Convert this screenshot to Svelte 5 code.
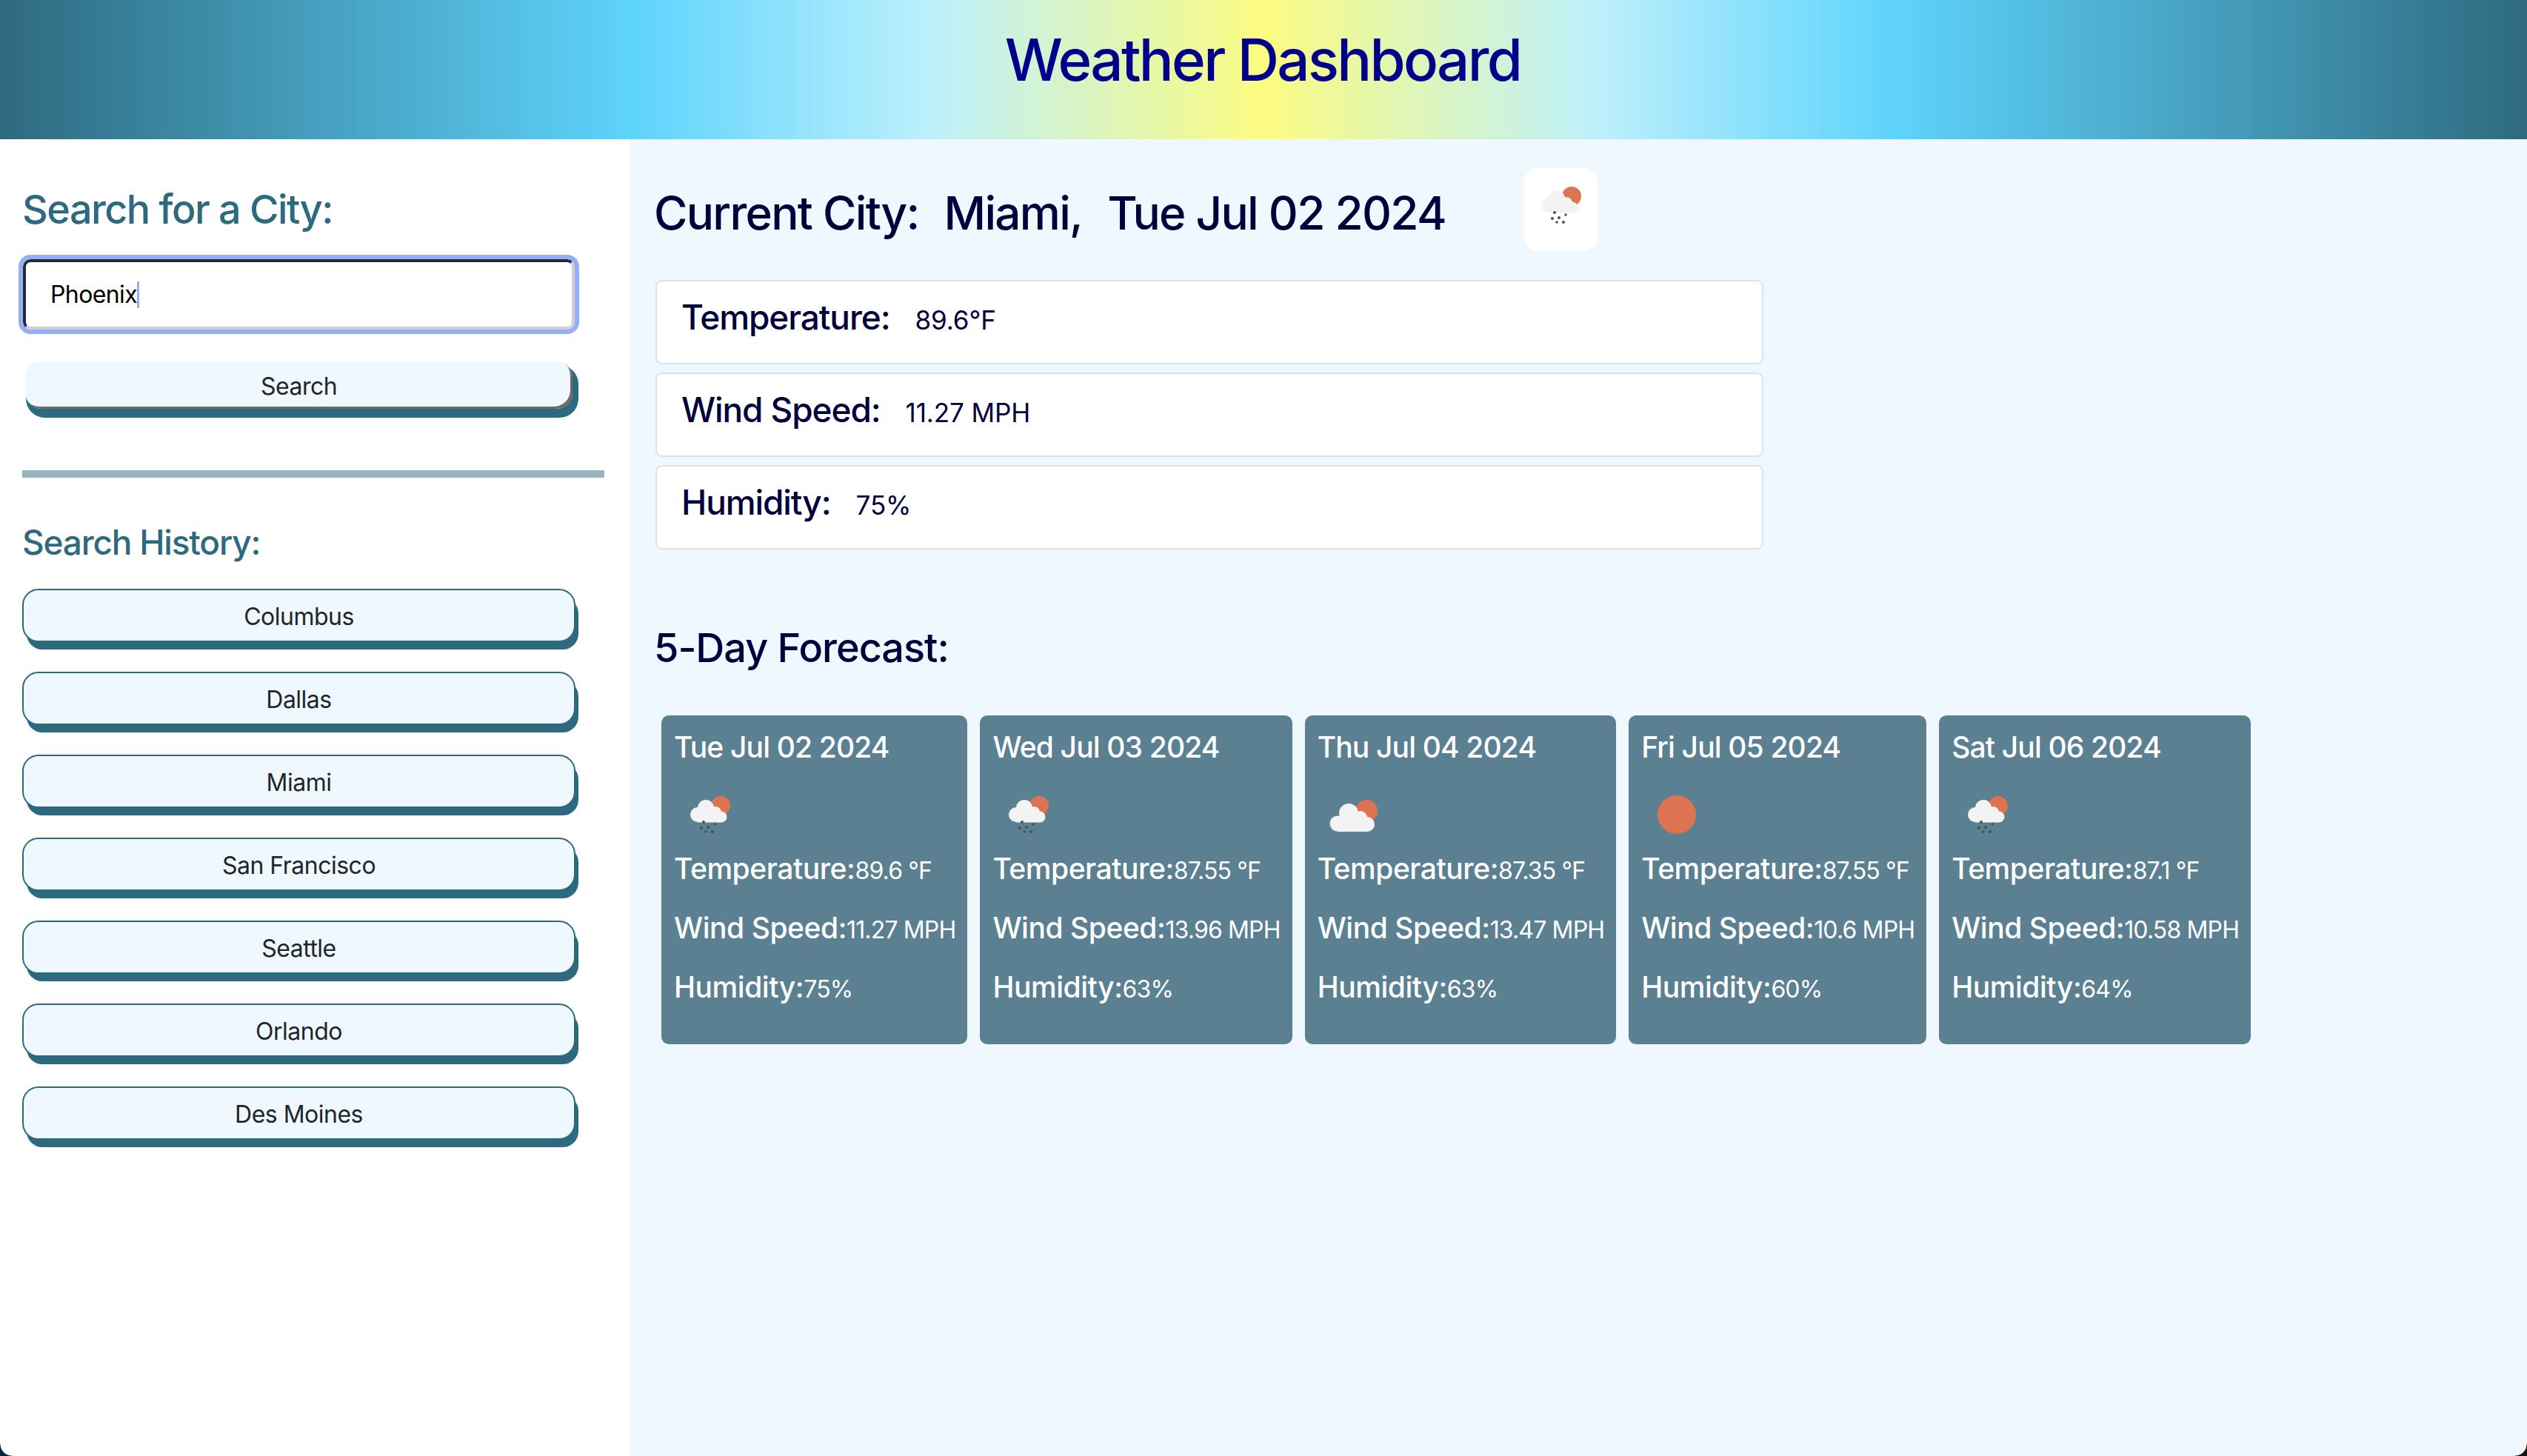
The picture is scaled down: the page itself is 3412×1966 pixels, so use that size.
<script lang="ts">
	type Condition = 'rain' | 'cloud' | 'sun';

	const history = ['Columbus', 'Dallas', 'Miami', 'San Francisco', 'Seattle', 'Orlando', 'Des Moines'];

	const stats = [
		{ label: 'Temperature:', value: '89.6°F' },
		{ label: 'Wind Speed:', value: '11.27 MPH' },
		{ label: 'Humidity:', value: '75%' }
	];

	const forecast: { date: string; icon: Condition; temp: string; wind: string; humidity: string }[] = [
		{ date: 'Tue Jul 02 2024', icon: 'rain', temp: '89.6 °F', wind: '11.27 MPH', humidity: '75%' },
		{ date: 'Wed Jul 03 2024', icon: 'rain', temp: '87.55 °F', wind: '13.96 MPH', humidity: '63%' },
		{ date: 'Thu Jul 04 2024', icon: 'cloud', temp: '87.35 °F', wind: '13.47 MPH', humidity: '63%' },
		{ date: 'Fri Jul 05 2024', icon: 'sun', temp: '87.55 °F', wind: '10.6 MPH', humidity: '60%' },
		{ date: 'Sat Jul 06 2024', icon: 'rain', temp: '87.1 °F', wind: '10.58 MPH', humidity: '64%' }
	];

	const rainDrops = [
		[42, 54, 2],
		[39, 62, 2],
		[48, 61, 2],
		[57, 57, 1.7],
		[45, 67, 1.7],
		[54, 67, 2]
	];
</script>

{#snippet weatherIcon(kind: Condition)}
	<svg class="weather-icon" viewBox="0 0 100 100" aria-hidden="true">
		{#if kind === 'sun'}
			<circle cx="50" cy="44" r="26" fill="#dd7350" />
		{:else if kind === 'cloud'}
			<circle cx="68" cy="39" r="15" fill="#dd7350" />
			<g fill="#f3f3f3">
				<circle cx="29" cy="56" r="10.5" />
				<circle cx="44" cy="42" r="13" />
				<circle cx="60" cy="48" r="9" />
				<circle cx="69" cy="57" r="10" />
				<rect x="29" y="50" width="40" height="17" />
			</g>
		{:else}
			<circle cx="65" cy="32" r="13" fill="#dd7350" />
			<g fill="#f3f3f3">
				<circle cx="34" cy="44" r="10" />
				<circle cx="45" cy="35" r="11" />
				<circle cx="58" cy="41" r="8" />
				<circle cx="66" cy="47" r="7.5" />
				<rect x="34" y="42" width="32" height="12.5" />
			</g>
			<g fill="#4a4f55">
				{#each rainDrops as [cx, cy, r]}
					<circle {cx} {cy} {r} />
				{/each}
			</g>
		{/if}
	</svg>
{/snippet}

<div class="page">
	<header class="banner">
		<h1>Weather Dashboard</h1>
	</header>

	<div class="layout">
		<aside class="sidebar">
			<h2>Search for a City:</h2>
			<div class="search-field">
				<span>Phoenix</span><i class="caret"></i>
			</div>
			<button type="button" class="city-btn search-btn">Search</button>
			<div class="rule"></div>
			<h3>Search History:</h3>
			<div class="history">
				{#each history as city}
					<button type="button" class="city-btn">{city}</button>
				{/each}
			</div>
		</aside>

		<main class="content">
			<div class="current-head">
				<h2>Current City:<span>Miami,</span><span>Tue Jul 02 2024</span></h2>
				<div class="icon-box">{@render weatherIcon('rain')}</div>
			</div>

			<ul class="stats">
				{#each stats as stat}
					<li><b>{stat.label}</b><span>{stat.value}</span></li>
				{/each}
			</ul>

			<h3 class="forecast-title">5-Day Forecast:</h3>

			<div class="forecast">
				{#each forecast as day}
					<article class="day">
						<h4>{day.date}</h4>
						<div class="day-icon">{@render weatherIcon(day.icon)}</div>
						<p><b>Temperature:</b>{day.temp}</p>
						<p><b>Wind Speed:</b>{day.wind}</p>
						<p><b>Humidity:</b>{day.humidity}</p>
					</article>
				{/each}
			</div>
		</main>
	</div>

	<i class="corner left"></i>
	<i class="corner right"></i>
</div>

<style>
	:global(body) {
		margin: 0;
		background: #f0f8ff;
	}

	.page {
		position: relative;
		height: 1966px;
		overflow: hidden;
		font-family: Inter, 'Liberation Sans', sans-serif;
		color: #212529;
	}

	.banner {
		height: 188px;
		box-sizing: border-box;
		padding-bottom: 28px;
		display: flex;
		align-items: center;
		justify-content: center;
		background: linear-gradient(to right, #2e6a7f 0%, #5dd3fc 25%, #bef0fb 37%, #fbfb80 50%, #bef0fb 63%, #5dd3fc 75%, #2e6a7f 100%);
	}

	.banner h1 {
		margin: 0 2px 0 0;
		font-size: 78px;
		font-weight: 550;
		letter-spacing: -2.7px;
		color: #00008b;
	}

	.layout {
		display: flex;
		height: 1778px;
	}

	.sidebar {
		width: 851px;
		flex: none;
		box-sizing: border-box;
		padding: 64px 35px 0 30px;
		background: #fff;
	}

	.sidebar h2 {
		margin: 0 0 36px;
		font-size: 54px;
		line-height: 62px;
		font-weight: 550;
		letter-spacing: -1.6px;
		color: #2e6a7f;
	}

	.search-field {
		width: 745px;
		height: 95px;
		box-sizing: border-box;
		display: flex;
		align-items: center;
		padding-left: 33px;
		margin: 0 0 43px 1px;
		border: 4px solid;
		border-color: #2a2a30 #cfcfcf #cfcfcf #2a2a30;
		border-radius: 10px;
		outline: 6px solid #94aff5;
		font-size: 32px;
		letter-spacing: -0.6px;
		color: #000;
		background: #fff;
	}

	.caret {
		width: 3px;
		height: 36px;
		background: #94aff5;
	}

	.city-btn {
		display: block;
		width: 743px;
		height: 66px;
		box-sizing: content-box;
		padding: 2px 0 0;
		border: 2px solid #2e6a7f;
		border-radius: 22px;
		background: #f0f8ff;
		box-shadow: 5px 11px 0 -1px #2e6a7f;
		font-family: inherit;
		font-size: 32px;
		letter-spacing: -0.5px;
		color: #212529;
		text-align: center;
	}

	.search-btn {
		width: 739px;
		height: 62px;
		margin-left: 4px;
		border: 0;
		box-shadow: inset -3px -3px 0 #6b6b6b, 4.5px 8.5px 0 3.5px #2e6a7f;
	}

	.rule {
		height: 10px;
		width: 786px;
		margin-top: 83px;
		background: #97b4bf;
	}

	.sidebar h3 {
		margin: 59px 0 35px;
		font-size: 46px;
		line-height: 56px;
		font-weight: 550;
		letter-spacing: -1.2px;
		color: #2e6a7f;
	}

	.history {
		display: flex;
		flex-direction: column;
		gap: 40px;
	}

	.content {
		flex: 1;
		box-sizing: border-box;
		padding: 39px 0 0 34px;
		background: #f0f8ff;
		color: #00003c;
	}

	.current-head {
		display: flex;
		align-items: center;
		height: 112px;
	}

	.current-head h2 {
		margin: 8px 0 0 -2px;
		width: 1174px;
		font-size: 62px;
		font-weight: 550;
		letter-spacing: -1.7px;
		white-space: nowrap;
	}

	.current-head h2 span {
		margin-left: 34px;
	}

	.icon-box {
		width: 100px;
		height: 112px;
		display: flex;
		align-items: center;
		justify-content: center;
		background: #fff;
		border-radius: 20px;
	}

	.icon-box .weather-icon {
		width: 100px;
		height: 100px;
	}

	.stats {
		list-style: none;
		margin: 39px 0 0;
		padding: 0;
		width: 1496px;
		display: flex;
		flex-direction: column;
		gap: 11px;
	}

	.stats li {
		height: 114px;
		box-sizing: border-box;
		padding: 20px 33px 0;
		display: flex;
		align-items: baseline;
		gap: 34px;
		background: #fff;
		border: 2px solid #dee2e6;
		border-radius: 9px;
		font-size: 35px;
		letter-spacing: -0.1px;
	}

	.stats b {
		font-size: 46px;
		font-weight: 550;
		letter-spacing: -1.1px;
	}

	.forecast-title {
		margin: 101px 0 59px -2px;
		font-size: 54px;
		line-height: 64px;
		font-weight: 550;
		letter-spacing: -1px;
	}

	.forecast {
		display: flex;
		gap: 17px;
		margin-left: 8px;
	}

	.day {
		height: 444px;
		box-sizing: border-box;
		padding: 18px 16px 0 17px;
		background: #5a8092;
		border-radius: 10px;
		color: #fff;
		font-size: 32px;
		letter-spacing: -0.85px;
		white-space: nowrap;
	}

	.day h4 {
		margin: 0;
		font-size: 39px;
		line-height: 50px;
		font-weight: 500;
		letter-spacing: -0.85px;
	}

	.day-icon {
		height: 93px;
		margin-top: 22px;
	}

	.day-icon .weather-icon {
		display: block;
		width: 100px;
		height: 100px;
		margin-left: -2px;
	}

	.day p {
		height: 48px;
		margin: 0 0 32px;
		line-height: 48px;
	}

	.day b {
		font-size: 39px;
		font-weight: 500;
		letter-spacing: -0.45px;
	}

	.corner {
		position: absolute;
		bottom: 0;
		width: 16px;
		height: 16px;
	}

	.corner.left {
		left: 0;
		background: radial-gradient(circle at 100% 0, transparent 15px, #0d2233 16px);
	}

	.corner.right {
		right: 0;
		background: radial-gradient(circle at 0 0, transparent 15px, #1a1208 16px);
	}
</style>
